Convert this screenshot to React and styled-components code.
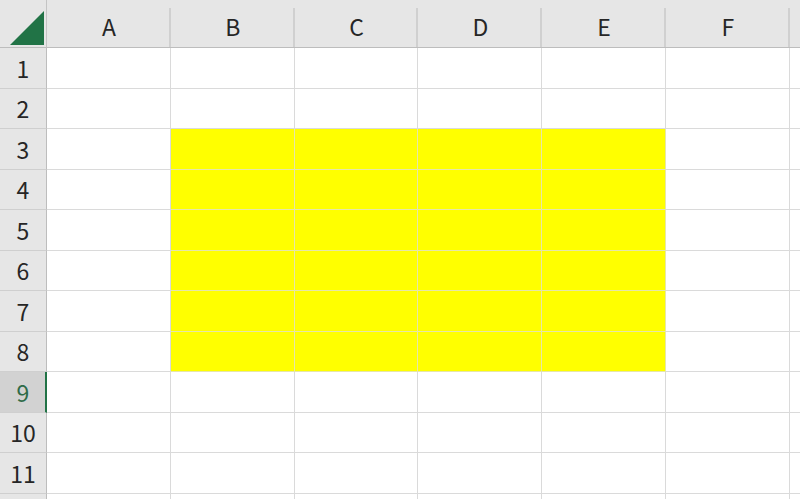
import styled, { createGlobalStyle } from "styled-components";

const Global = createGlobalStyle`
  html, body { margin: 0; padding: 0; background: #fff; }
  body { font-family: "Noto Sans CJK JP", "Noto Sans", sans-serif; }
`;

const COLS = ["A", "B", "C", "D", "E", "F", "G"];
const ROWS = [1, 2, 3, 4, 5, 6, 7, 8, 9, 10, 11, 12];

const Sheet = styled.div`
  width: 800px;
  height: 499px;
  overflow: hidden;
  display: grid;
  grid-template-columns: 47px repeat(7, 123.8px);
  grid-template-rows: 48px repeat(12, 40.5px);
`;

const Corner = styled.div`
  background: #e6e6e6;
  border-bottom: 1px solid #bdbdbd;
  border-right: 1px solid #c4c4c4;
  display: flex;
  align-items: flex-end;
  justify-content: flex-end;
  padding: 0 2px 2px 0;
  box-sizing: border-box;
`;

const ColHead = styled.div`
  position: relative;
  background: #e6e6e6;
  border-bottom: 1px solid #bdbdbd;
  display: flex;
  align-items: center;
  justify-content: center;
  padding-top: 5px;
  box-sizing: border-box;
  font-size: 23px;
  color: #262626;
  &::after {
    content: "";
    position: absolute;
    right: 0;
    top: 8px;
    bottom: 0;
    width: 2px;
    background: #d0d0d0;
  }
`;

const RowHead = styled.div`
  background: ${(p) => (p.$active ? "#d2d2d2" : "#e6e6e6")};
  color: ${(p) => (p.$active ? "#2f6b48" : "#262626")};
  border-bottom: 1px solid #cfcfcf;
  border-right: ${(p) => (p.$active ? "2px solid #217346" : "1px solid #bdbdbd")};
  display: flex;
  align-items: center;
  justify-content: center;
  box-sizing: border-box;
  font-size: 23px;
  padding-left: ${(p) => (p.$active ? "1px" : "0")};
`;

const Cell = styled.div`
  background: ${(p) => (p.$fill ? "#ffff00" : "#fff")};
  border-right: 1px solid ${(p) => (p.$fill ? "#e6e6a8" : "#dadada")};
  border-bottom: 1px solid ${(p) => (p.$fill ? "#e6e6a8" : "#dadada")};
  box-sizing: border-box;
`;

const isFilled = (r, c) => r >= 3 && r <= 8 && c >= 1 && c <= 4;

export default function App() {
  return (
    <>
      <Global />
      <Sheet>
        <Corner>
          <svg width="34" height="34" viewBox="0 0 34 34">
            <polygon points="0,34 34,34 34,0" fill="#217346" />
          </svg>
        </Corner>
        {COLS.map((c) => (
          <ColHead key={c}>{c === "G" ? "" : c}</ColHead>
        ))}
        {ROWS.map((r) => [
          <RowHead key={`h${r}`} $active={r === 9}>
            {r < 12 ? r : ""}
          </RowHead>,
          ...COLS.map((c, i) => (
            <Cell key={`${c}${r}`} $fill={isFilled(r, i)} />
          )),
        ])}
      </Sheet>
    </>
  );
}
